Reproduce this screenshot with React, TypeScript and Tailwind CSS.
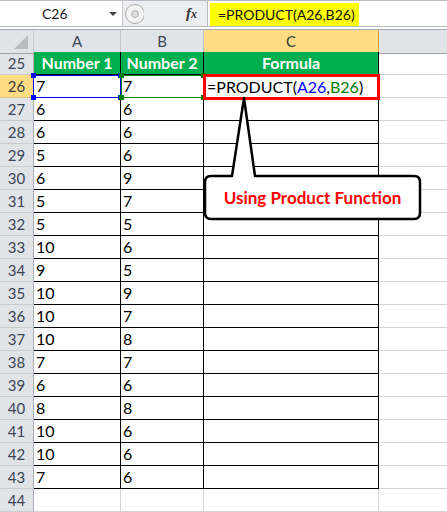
import React from "react";

type Row = { n: number; a: string; b: string };

const rows: Row[] = [
  { n: 26, a: "7", b: "7" },
  { n: 27, a: "6", b: "6" },
  { n: 28, a: "6", b: "6" },
  { n: 29, a: "5", b: "6" },
  { n: 30, a: "6", b: "9" },
  { n: 31, a: "5", b: "7" },
  { n: 32, a: "5", b: "5" },
  { n: 33, a: "10", b: "6" },
  { n: 34, a: "9", b: "5" },
  { n: 35, a: "10", b: "9" },
  { n: 36, a: "10", b: "7" },
  { n: 37, a: "10", b: "8" },
  { n: 38, a: "7", b: "7" },
  { n: 39, a: "6", b: "6" },
  { n: 40, a: "8", b: "8" },
  { n: 41, a: "10", b: "6" },
  { n: 42, a: "10", b: "6" },
  { n: 43, a: "7", b: "6" },
];

const cols = "grid grid-cols-[34px_87px_83px_175px_1fr]";

const RowHead = ({ n, active }: { n: number; active?: boolean }) => (
  <div
    className={
      "h-[23px] flex items-center justify-center text-[15px] border-r border-b " +
      (active
        ? "bg-[#fddc83] border-r-[#e29a36] border-b-[#e7c077] text-[#3b3b3b]"
        : "bg-[#e0e3e8] border-r-[#a9adb3] border-b-[#c9cdd2] text-[#3b4656]")
    }
  >
    {n}
  </div>
);

const Corner = ({ className }: { className: string }) => (
  <span className={"absolute w-[5px] h-[5px] " + className} />
);

export default function App() {
  return (
    <div
      className="relative w-[447px] h-[512px] overflow-hidden bg-white text-black"
      style={{ fontFamily: "Lato, 'Open Sans', sans-serif" }}
    >
      {/* formula bar */}
      <div className="flex h-[27px] border-t border-b border-[#b8bcc2] bg-white">
        <div className="relative w-[123px] flex items-center border-r border-[#c8c8c8]">
          <span className="ml-[42px] text-[14px] text-[#1a1a1a]">C26</span>
          <span className="absolute right-[5px] top-[11px] w-0 h-0 border-l-[4px] border-r-[4px] border-t-[4px] border-l-transparent border-r-transparent border-t-[#444]" />
        </div>
        <div className="relative w-[84px] bg-[#eceef1] flex items-center">
          <svg width="20" height="24" viewBox="0 0 20 24" className="ml-[1px]">
            <circle cx="11" cy="12" r="9.5" fill="#f3f3f3" stroke="#a6a6a6" />
            <circle cx="11" cy="12" r="3.5" fill="#dcdcdc" stroke="#b3b3b3" />
          </svg>
          <span
            className="ml-auto mr-[10px] text-[15px] italic font-bold text-[#333]"
            style={{ fontFamily: "'Liberation Serif', serif" }}
          >
            f<span className="text-[12px]">x</span>
          </span>
        </div>
        <div className="flex-1 border-l border-[#b8bcc2] flex items-end pl-[2px]">
          <div className="h-[23px] w-[149px] bg-[#ffff00] flex items-center pl-[8px] text-[14px] text-[#111]">
            =PRODUCT(A26,B26)
          </div>
        </div>
      </div>

      {/* gap */}
      <div className="h-[3px] bg-white border-b border-[#a9adb3]" />

      {/* column headers */}
      <div className={cols + " h-[22px] text-[15px] text-[#3b4656]"}>
        <div className="relative bg-[#e0e3e8] border-r border-b border-r-[#c3c7cc] border-b-[#9ea3a9]">
          <svg width="14" height="14" className="absolute right-[5px] bottom-[4px]">
            <polygon points="14,0 14,14 0,14" fill="#b9bdc3" />
          </svg>
        </div>
        <div className="flex items-center justify-center bg-[#e0e3e8] border-r border-b border-r-[#c3c7cc] border-b-[#9ea3a9]">A</div>
        <div className="flex items-center justify-center bg-[#e0e3e8] border-r border-b border-r-[#c3c7cc] border-b-[#9ea3a9]">B</div>
        <div className="flex items-center justify-center bg-[#fedd86] border-r border-b border-r-[#e29a36] border-b-[#e29a36] text-[#3b3b3b]">C</div>
        <div className="bg-[#e0e3e8] border-b border-b-[#9ea3a9]" />
      </div>

      {/* row 25 header row */}
      <div className={cols}>
        <RowHead n={25} />
        <div className="h-[23px] bg-[#00b050] text-white font-bold text-[16px] flex items-center justify-center border-r border-b border-black">Number 1</div>
        <div className="h-[23px] bg-[#00b050] text-white font-bold text-[16px] flex items-center justify-center border-r border-b border-black">Number 2</div>
        <div className="h-[23px] bg-[#00b050] text-white font-bold text-[16px] flex items-center justify-center border-r border-b border-black">Formula</div>
        <div className="h-[23px] border-b border-[#d4d4d4]" />
      </div>

      {rows.map((r) => (
        <div key={r.n} className={cols}>
          <RowHead n={r.n} active={r.n === 26} />
          <div className="h-[23px] flex items-center pl-[2px] text-[16px] border-r border-b border-black">{r.a}</div>
          <div className="h-[23px] flex items-center pl-[2px] text-[16px] border-r border-b border-black">{r.b}</div>
          <div className="h-[23px] border-r border-b border-black" />
          <div className="h-[23px] border-b border-[#d4d4d4]" />
        </div>
      ))}

      {/* row 44 */}
      <div className={cols}>
        <RowHead n={44} />
        <div className="h-[23px] border-r border-b border-[#d4d4d4]" />
        <div className="h-[23px] border-r border-b border-[#d4d4d4]" />
        <div className="h-[23px] border-r border-b border-[#d4d4d4]" />
        <div className="h-[23px] border-b border-[#d4d4d4]" />
      </div>

      {/* A26 reference highlight */}
      <div className="absolute left-[33px] top-[75px] w-[88px] h-[23px] border border-[#0000ff]">
        <Corner className="bg-[#0000ff] -left-[3px] -top-[3px]" />
        <Corner className="bg-[#0000ff] -right-[3px] -top-[3px]" />
        <Corner className="bg-[#0000ff] -left-[3px] -bottom-[3px]" />
        <Corner className="bg-[#0000ff] -right-[3px] -bottom-[3px]" />
      </div>

      {/* B26 reference highlight */}
      <div className="absolute left-[121px] top-[75px] w-[83px] h-[23px] border border-[#008000]">
        <Corner className="bg-[#008000] -left-[3px] -top-[3px]" />
        <Corner className="bg-[#008000] -right-[3px] -top-[3px]" />
        <Corner className="bg-[#008000] -left-[3px] -bottom-[3px]" />
        <Corner className="bg-[#008000] -right-[3px] -bottom-[3px]" />
      </div>

      {/* C26 formula cell */}
      <div className="absolute left-[203px] top-[74px] w-[177px] h-[26px] border-[3px] border-[#ff0000] bg-white flex items-center pl-[1px] text-[16px] text-black">
        <span>=PRODUCT(</span>
        <span className="text-[#0000ff]">A26</span>
        <span>,</span>
        <span className="text-[#008000]">B26</span>
        <span>)</span>
      </div>

      {/* callout */}
      <svg className="absolute left-0 top-0" width="447" height="512">
        <path
          d="M232 176 L244 98 L255 176 L414 176 Q420 176 420 182 L420 213 Q420 219 414 219 L211 219 Q205 219 205 213 L205 182 Q205 176 211 176 Z"
          fill="white"
          stroke="black"
          strokeWidth="2.5"
          strokeLinejoin="round"
        />
      </svg>
      <div className="absolute left-[205px] top-[176px] w-[215px] h-[43px] flex items-center justify-center text-[#ff0000] font-bold text-[17px]">
        Using Product Function
      </div>
    </div>
  );
}
